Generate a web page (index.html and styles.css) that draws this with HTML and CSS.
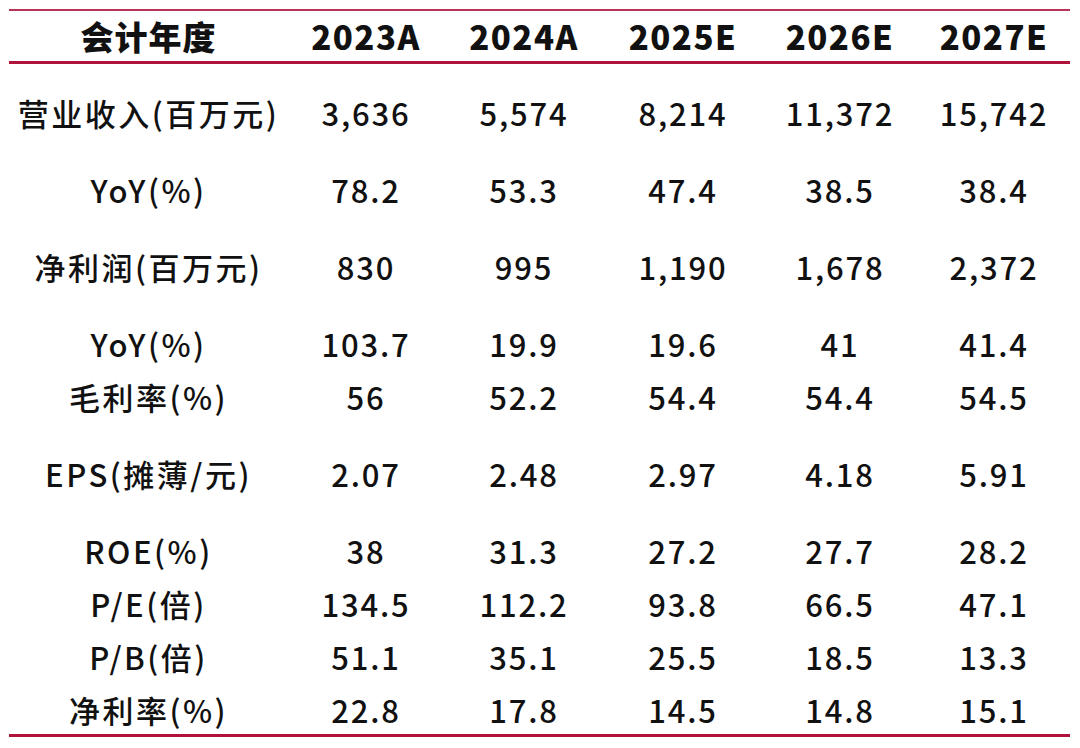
FILE: index.html
```html
<!DOCTYPE html>
<html lang="zh-CN">
<head>
<meta charset="utf-8">
<title>盈利预测</title>
<link rel="stylesheet" href="styles.css">
</head>
<body>
<div class="table">
  <div class="row head">
    <div class="cell label">会计年度</div>
    <div class="cell">2023A</div>
    <div class="cell">2024A</div>
    <div class="cell">2025E</div>
    <div class="cell">2026E</div>
    <div class="cell last">2027E</div>
  </div>
  <div class="body">
    <div class="row first">
      <div class="cell label">营业收入(百万元)</div>
      <div class="cell">3,636</div><div class="cell">5,574</div><div class="cell">8,214</div><div class="cell">11,372</div><div class="cell last">15,742</div>
    </div>
    <div class="row spaced">
      <div class="cell label">YoY(%)</div>
      <div class="cell">78.2</div><div class="cell">53.3</div><div class="cell">47.4</div><div class="cell">38.5</div><div class="cell last">38.4</div>
    </div>
    <div class="row spaced">
      <div class="cell label">净利润(百万元)</div>
      <div class="cell">830</div><div class="cell">995</div><div class="cell">1,190</div><div class="cell">1,678</div><div class="cell last">2,372</div>
    </div>
    <div class="row spaced">
      <div class="cell label">YoY(%)</div>
      <div class="cell">103.7</div><div class="cell">19.9</div><div class="cell">19.6</div><div class="cell">41</div><div class="cell last">41.4</div>
    </div>
    <div class="row">
      <div class="cell label">毛利率(%)</div>
      <div class="cell">56</div><div class="cell">52.2</div><div class="cell">54.4</div><div class="cell">54.4</div><div class="cell last">54.5</div>
    </div>
    <div class="row spaced">
      <div class="cell label">EPS(摊薄/元)</div>
      <div class="cell">2.07</div><div class="cell">2.48</div><div class="cell">2.97</div><div class="cell">4.18</div><div class="cell last">5.91</div>
    </div>
    <div class="row spaced">
      <div class="cell label">ROE(%)</div>
      <div class="cell">38</div><div class="cell">31.3</div><div class="cell">27.2</div><div class="cell">27.7</div><div class="cell last">28.2</div>
    </div>
    <div class="row">
      <div class="cell label">P/E(倍)</div>
      <div class="cell">134.5</div><div class="cell">112.2</div><div class="cell">93.8</div><div class="cell">66.5</div><div class="cell last">47.1</div>
    </div>
    <div class="row">
      <div class="cell label">P/B(倍)</div>
      <div class="cell">51.1</div><div class="cell">35.1</div><div class="cell">25.5</div><div class="cell">18.5</div><div class="cell last">13.3</div>
    </div>
    <div class="row">
      <div class="cell label">净利率(%)</div>
      <div class="cell">22.8</div><div class="cell">17.8</div><div class="cell">14.5</div><div class="cell">14.8</div><div class="cell last">15.1</div>
    </div>
  </div>
</div>
</body>
</html>
```

FILE: styles.css
```css
html, body {
  margin: 0;
  padding: 0;
  background: #ffffff;
}

body {
  font-family: "Noto Sans CJK SC", "Noto Sans", sans-serif;
  color: #111111;
  padding-top: 9px;
  padding-left: 9px;
}

.table {
  width: 1061px;
  border-top: 2px solid #b8345a;
  border-bottom: 3px solid #b0123c;
}

.row {
  display: grid;
  grid-template-columns: 279px 156px 160px 158px 156px 152px;
  height: 48px;
  align-items: center;
  margin-top: 5px;
}

.row.head {
  margin-top: 0;
  height: 50px;
  border-bottom: 3px solid #b0123c;
}

.row.first {
  margin-top: 25px;
}

.row.spaced {
  margin-top: 29px;
}

.cell {
  text-align: center;
  font-size: 31px;
  line-height: 48px;
  letter-spacing: 1.8px;
  font-weight: 500;
  white-space: nowrap;
}

.cell.label {
  letter-spacing: 2.5px;
}

.row.head .cell {
  font-size: 33px;
  font-weight: 900;
  line-height: 50px;
  letter-spacing: 1.5px;
}

.row.head .cell.label {
  letter-spacing: 1px;
}
```
